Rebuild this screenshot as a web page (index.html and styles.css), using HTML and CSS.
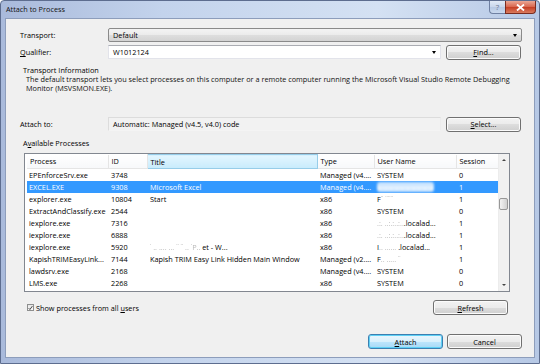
FILE: index.html
```html
<!DOCTYPE html>
<html lang="en">
<head>
	<meta charset="UTF-8">
	<title>Attach to Process</title>
	<link rel="stylesheet" href="styles.css">
</head>
<body>
<div class="window">
	<!-- title bar -->
	<div class="titlebar">
		<span class="caption">Attach to Process</span>
		<div class="tb-btns">
			<div class="tb-help">?</div>
			<div class="tb-close">
				<svg width="9" height="7" viewBox="0 0 9 7"><path d="M1 0.5 L8 6.5 M8 0.5 L1 6.5" stroke="#fff" stroke-width="1.8" fill="none"/></svg>
			</div>
		</div>
	</div>

	<div class="client">
		<div class="row">
			<div class="lbl">Transport:</div>
			<div class="combo">Default<span class="arrow"></span></div>
		</div>
		<div class="row row-gap">
			<div class="lbl"><u>Q</u>ualifier:</div>
			<div class="edit-combo">W1012124<span class="arrow"></span></div>
			<button class="btn"><u>F</u>ind...</button>
		</div>

		<div class="info">
			<div class="info-title">Transport Information</div>
			<div class="info-text">The default transport lets you select processes on this computer or a remote computer running the Microsoft Visual Studio Remote Debugging<br>Monitor (MSVSMON.EXE).</div>
		</div>

		<div class="row row-attach">
			<div class="lbl">Attach to:</div>
			<div class="readonly">Automatic: Managed (v4.5, v4.0) code</div>
			<button class="btn"><u>S</u>elect...</button>
		</div>

		<div class="section-lbl">A<u>v</u>ailable Processes</div>

		<!-- process list -->
		<div class="list">
			<div class="list-body">
				<table class="grid">
					<colgroup>
						<col style="width:81px"><col style="width:39px"><col style="width:170px"><col style="width:57px"><col style="width:82px"><col style="width:42px">
					</colgroup>
					<thead>
						<tr><th>Process</th><th>ID</th><th class="hot">Title</th><th>Type</th><th>User Name</th><th>Session</th></tr>
					</thead>
					<tbody>
						<tr><td>EPEnforceSrv.exe</td><td>3748</td><td></td><td>Managed (v4....</td><td>SYSTEM</td><td>0</td></tr>
						<tr class="sel"><td>EXCEL.EXE</td><td>9308</td><td>Microsoft Excel</td><td>Managed (v4....</td><td><span class="smear">wwwwwwwwww</span></td><td>1</td></tr>
						<tr><td>explorer.exe</td><td>10804</td><td>Start</td><td>x86</td><td>F<span class="faint">˙˙ ˙˙˙˙˙˙</span></td><td>1</td></tr>
						<tr><td>ExtractAndClassify.exe</td><td>2544</td><td></td><td>x86</td><td>SYSTEM</td><td>0</td></tr>
						<tr><td>iexplore.exe</td><td>7316</td><td></td><td>x86</td><td><span class="faint">.:. ..:.:..:..</span>.localad...</td><td>1</td></tr>
						<tr><td>iexplore.exe</td><td>6888</td><td></td><td>x86</td><td><span class="faint">.:. ..:.:..:..</span>.localad...</td><td>1</td></tr>
						<tr><td>iexplore.exe</td><td>5920</td><td><span class="faint">˙ .. .... ... ˙˙ ˙˙ .. ˙P..</span> et - W...</td><td>x86</td><td>I<span class="faint">.. ......  </span>.localad...</td><td>1</td></tr>
						<tr><td>KapishTRIMEasyLink...</td><td>7144</td><td>Kapish TRIM Easy Link Hidden Main Window</td><td>Managed (v2....</td><td>F<span class="faint">..  ..... ˙˙</span></td><td>1</td></tr>
						<tr><td>lawdsrv.exe</td><td>2168</td><td></td><td>Managed (v4....</td><td>SYSTEM</td><td>0</td></tr>
						<tr><td>LMS.exe</td><td>2268</td><td></td><td>x86</td><td>SYSTEM</td><td>0</td></tr>
						<tr class="cut"><td>LogonAgent@Agent.exe</td><td>2268</td><td></td><td>Managed (v2....</td><td>SYSTEM</td><td>0</td></tr>
					</tbody>
				</table>
			</div>
			<div class="vscroll">
				<div class="sb-btn"><span class="up"></span></div>
				<div class="sb-track"><div class="sb-thumb"></div></div>
				<div class="sb-btn"><span class="down"></span></div>
			</div>
		</div>

		<div class="row-check">
			<label class="check">
				<span class="box"><svg width="6" height="6" viewBox="0 0 6 6"><path d="M0.8 3.2 L2.3 4.8 L5.2 0.8" stroke="#333" stroke-width="1.1" fill="none"/></svg></span>
				<span>Show processes from all <u>u</u>sers</span>
			</label>
			<button class="btn"><u>R</u>efresh</button>
		</div>

		<div class="footer">
			<button class="btn btn-default"><u>A</u>ttach</button>
			<button class="btn">Cancel</button>
		</div>
	</div>
</div>
</body>
</html>
```

FILE: styles.css
```css
*{
	box-sizing: border-box;
}
html,body{
	margin: 0;
	padding: 0;
}
body{
	width: 540px;
	height: 364px;
	overflow: hidden;
	font-family: "Open Sans", "Noto Sans", sans-serif;
	font-size: 7.3px;
	color: #000;
	background: #fff;
}
/*窗口外框*/
.window{
	width: 540px;
	height: 364px;
	display: flex;
	flex-direction: column;
	padding: 0 4px 5px 4px;
	border: 1px solid #5d6d8f;
	border-radius: 4px 4px 0 0;
	background: linear-gradient(to right, #a9badb, #c3d3ec 30%, #d4e1f3 70%, #b6c8e5);
}
/*标题栏*/
.titlebar{
	height: 17px;
	display: flex;
	align-items: flex-start;
}
.caption{
	padding: 4px 0 0 1px;
	line-height: 9px;
	color: #111;
}
.tb-btns{
	margin-left: auto;
	display: flex;
	margin-right: -1px;
}
.tb-help{
	width: 16px;
	height: 13px;
	border: 1px solid #6f80a2;
	border-top: none;
	border-right: none;
	border-radius: 0 0 0 4px;
	background: linear-gradient(#e2eaf6, #c8d6ec 50%, #b6c8e3 50%, #c9d8ee);
	color: #6b7890;
	text-align: center;
	line-height: 11px;
	font-size: 8px;
}
.tb-close{
	width: 31px;
	height: 13px;
	border: 1px solid #7a2c20;
	border-top: none;
	border-radius: 0 0 4px 0;
	background: linear-gradient(#eaa795, #d8644c 50%, #c43c22 50%, #d97b5d);
	display: flex;
	align-items: center;
	justify-content: center;
}
/*客户区*/
.client{
	flex: 1;
	background: #f0f0f0;
	border: 1px solid #8d9dbb;
	padding: 9px 12px 0 14px;
}
.row{
	display: flex;
	align-items: center;
	height: 14px;
}
.row-gap{
	margin-top: 3px;
}
.row-attach{
	margin-top: 24px;
}
.lbl{
	width: 88px;
	flex: none;
}
.arrow{
	position: absolute;
	right: 4px;
	top: 5px;
	border-left: 2.5px solid transparent;
	border-right: 2.5px solid transparent;
	border-top: 3px solid #000;
}
.combo{
	position: relative;
	flex: 1;
	height: 14px;
	line-height: 12px;
	padding-left: 4px;
	border: 1px solid #8a8a8a;
	border-radius: 2px;
	background: linear-gradient(#f3f3f3, #ebebeb 50%, #dedede 50%, #d3d3d3);
}
.edit-combo{
	position: relative;
	width: 333px;
	height: 14px;
	line-height: 12px;
	padding-left: 4px;
	border: 1px solid #e2e3ea;
	border-top-color: #abadb3;
	background: #fff;
	margin-right: 5px;
}
.readonly{
	width: 333px;
	height: 14px;
	line-height: 12px;
	padding-left: 4px;
	border: 1px solid #dcdcdc;
	border-bottom-color: #f4f4f4;
	border-right-color: #ececec;
	background: #f2f2f2;
	margin-right: 5px;
}
/*按钮*/
.btn{
	width: 75px;
	height: 15px;
	flex: none;
	padding: 0;
	border: 1px solid #707070;
	border-radius: 3px;
	background: linear-gradient(#f2f2f2, #ebebeb 50%, #dddddd 50%, #cfcfcf);
	box-shadow: inset 0 0 0 1px #fbfbfb;
	font: inherit;
	color: #000;
	line-height: 12px;
	text-align: center;
}
.btn-default{
	border-color: #3c7fb1;
	background: linear-gradient(#eaf6fd, #d9f0fc 50%, #bee6fd 50%, #a7d9f5);
	box-shadow: inset 0 0 0 1px #5ed0f5;
}
/*传输信息*/
.info{
	margin-top: 7px;
	line-height: 9px;
}
.info-title{
	padding-left: 3px;
}
.info-text{
	padding-left: 6px;
	white-space: nowrap;
	color: #111;
}
.section-lbl{
	margin-top: 8px;
	padding-left: 3px;
	line-height: 9px;
}
/*进程列表*/
.list{
	margin: 5px 0 0 4px;
	width: 486px;
	height: 139px;
	display: flex;
	border: 1px solid #828790;
	background: #fff;
	overflow: hidden;
}
.list-body{
	flex: 1;
	padding-left: 2px;
	overflow: hidden;
}
.grid{
	table-layout: fixed;
	border-collapse: collapse;
	width: 471px;
}
.grid th{
	height: 14px;
	font-weight: normal;
	text-align: left;
	padding: 0 3px;
	border-right: 1px solid #e5e5e5;
	border-bottom: 1px solid #e5e5e5;
	background: linear-gradient(#ffffff, #f7f8fa);
	white-space: nowrap;
}
.grid th.hot{
	background: linear-gradient(#e3f6ff, #c8ebfc);
	border: 1px solid #97cde9;
}
.grid td{
	height: 12px;
	padding: 0 3px;
	white-space: nowrap;
	overflow: hidden;
	line-height: 12px;
}
.grid td:first-child{
	padding: 0 0 0 2px;
}
.grid tr.sel td{
	background: #3399ff;
	color: #fff;
}
/*最后一行只露出上半部分*/
.grid tr.cut td{
	color: #555;
}
.faint{
	color: #b8b8b8;
	filter: blur(0.4px);
}
.smear{
	color: #fff;
	background: rgba(255,255,255,0.75);
	border-radius: 3px;
	filter: blur(1px);
}
/*滚动条*/
.vscroll{
	width: 11px;
	flex: none;
	display: flex;
	flex-direction: column;
	background: #f1f1f1;
	border-left: 1px solid #ececec;
}
.sb-btn{
	height: 12px;
	display: flex;
	align-items: center;
	justify-content: center;
}
.sb-btn .up{
	border-left: 2px solid transparent;
	border-right: 2px solid transparent;
	border-bottom: 2.5px solid #444;
}
.sb-btn .down{
	border-left: 2px solid transparent;
	border-right: 2px solid transparent;
	border-top: 2.5px solid #444;
}
.sb-track{
	flex: 1;
	padding-top: 32px;
}
.sb-thumb{
	width: 9px;
	height: 12px;
	border: 1px solid #979797;
	border-radius: 2px;
	background: linear-gradient(to right, #f2f2f2, #e2e2e2 50%, #d0d0d0);
}
/*底部*/
.row-check{
	margin: 8px 0 0 4px;
	width: 486px;
	height: 15px;
	display: flex;
	align-items: center;
	justify-content: space-between;
	padding: 0 2px 0 3px;
}
.check{
	display: flex;
	align-items: center;
	gap: 2px;
}
.box{
	width: 7px;
	height: 7px;
	border: 1px solid #8e8f8f;
	background: linear-gradient(#e6e6e6, #fbfbfb);
	display: flex;
	align-items: center;
	justify-content: center;
}
.footer{
	margin-top: 19px;
	display: flex;
	justify-content: flex-end;
	gap: 4px;
}
```
